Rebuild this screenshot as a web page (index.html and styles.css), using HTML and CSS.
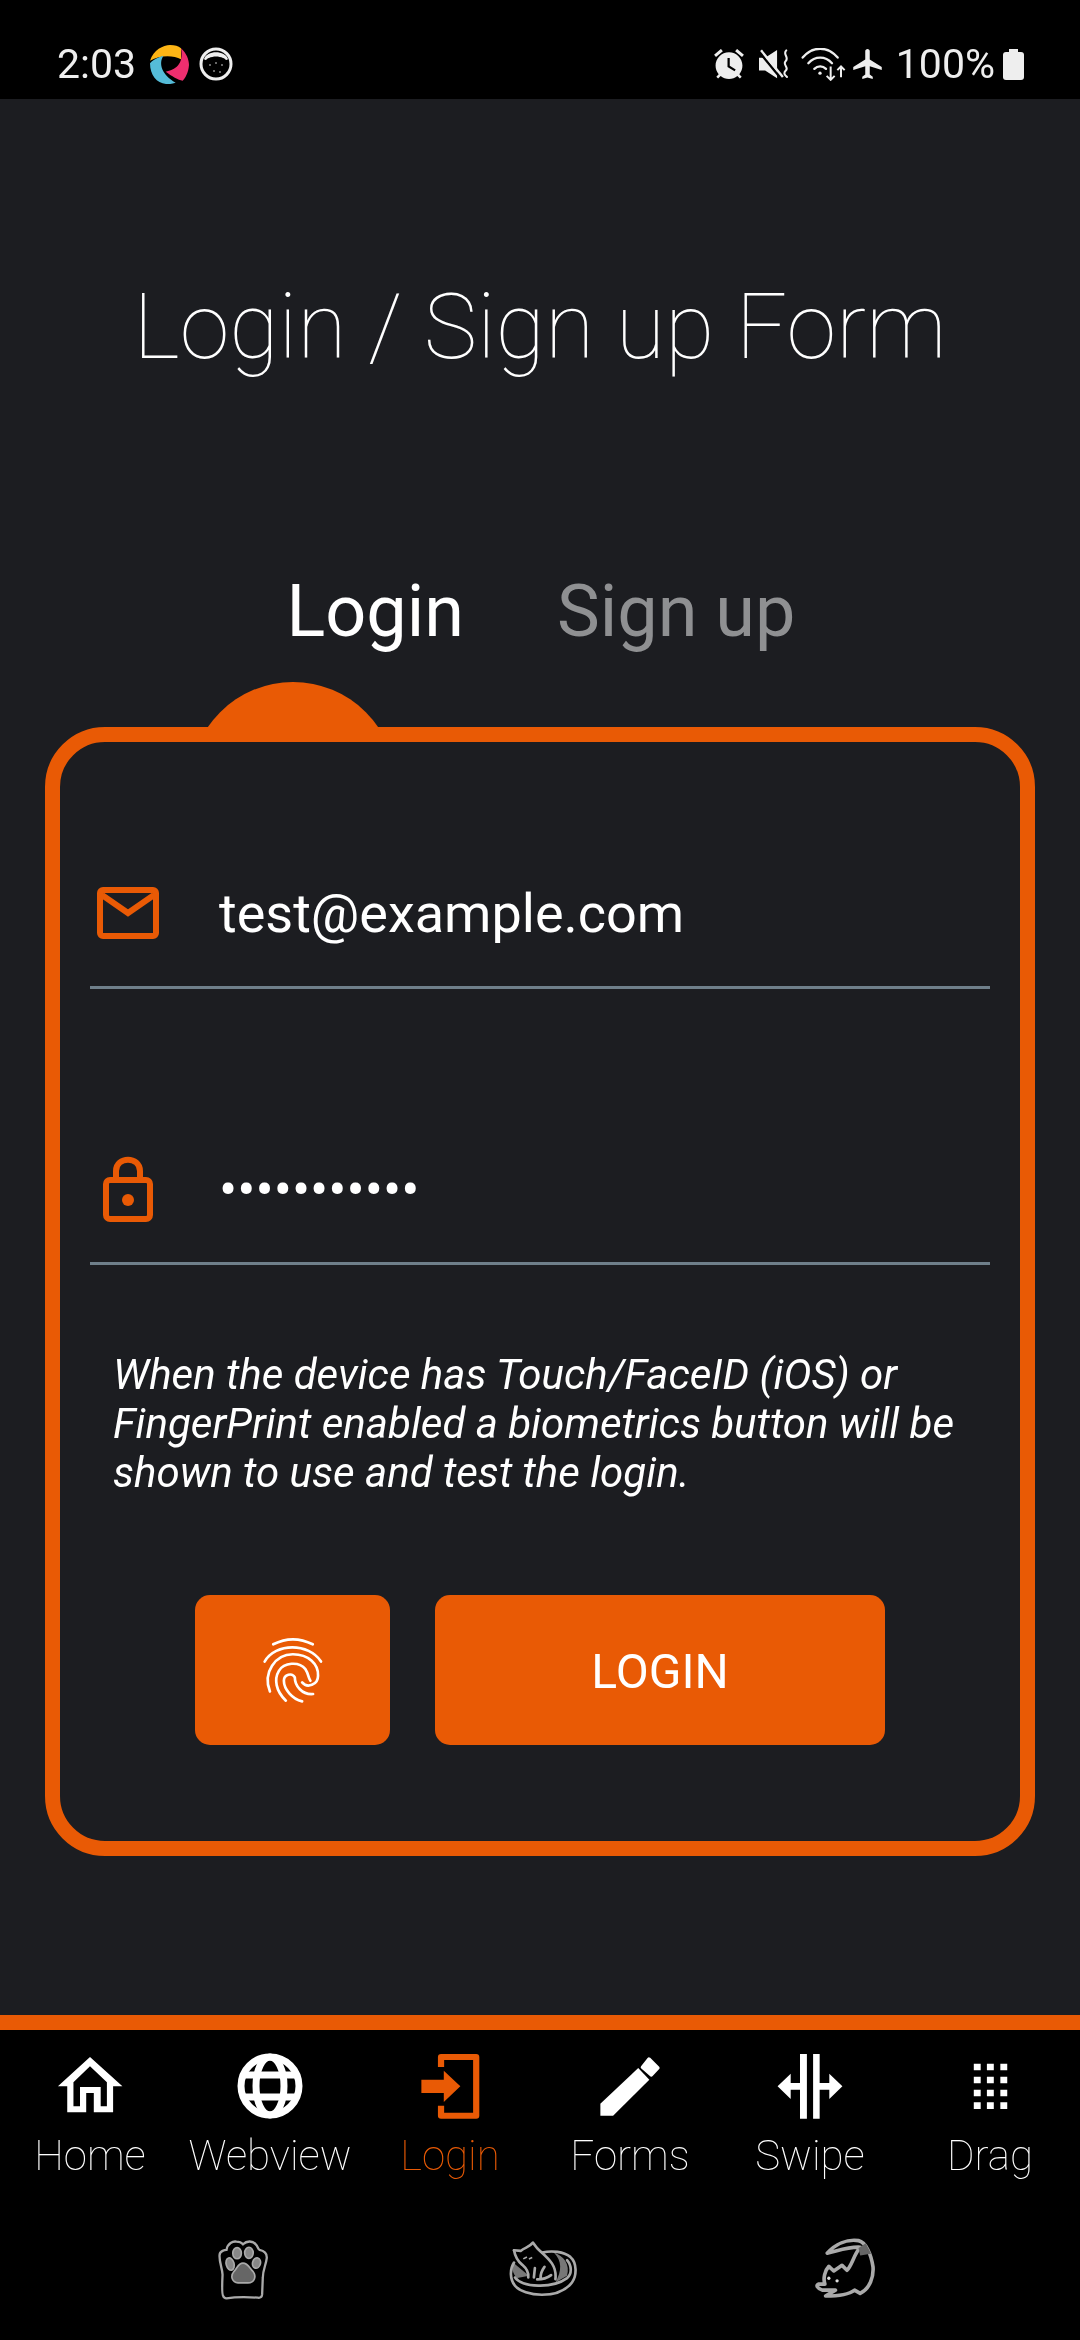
FILE: index.html
```html
<!DOCTYPE html>
<html lang="en">
  <head>
    <meta charset="UTF-8" />
    <meta name="viewport" content="width=device-width, initial-scale=1.0" />
    <title>Login / Sign up Form</title>
    <link rel="stylesheet" href="styles.css">
  </head>
  <body>
    <div class="status-bar">
      <div class="status-left">
        <span class="clock">2:03</span>
        <svg class="app-icon" viewBox="450 135 117 117">
          <path fill="#fdb515" d="M450 182C460 150 490 135 510 135C525 135 535 138 543 145L543 178C520 165 480 165 450 182Z" />
          <path fill="#ee2e6f" d="M543 145C560 160 567 180 567 195C565 220 555 235 548 242C535 240 515 228 497 215C525 210 552 195 543 145Z" />
          <path fill="#55bcd8" d="M450 190C465 172 490 168 490 168C475 190 485 225 527 248C515 252 505 252 498 252C470 250 450 225 450 190Z" />
        </svg>
        <svg class="app-icon cat-dot" viewBox="0 0 34 34">
          <circle cx="17" cy="17" r="15" fill="#000" stroke="#eee" stroke-width="3" />
          <path fill="#eee" d="M5 12C8 3 26 3 29 12C27 15 26 11 24 11C20 9 14 9 10 11C8 11 7 15 5 12Z" />
          <circle cx="11" cy="18" r="1" fill="#888" />
          <circle cx="17" cy="16" r="1" fill="#888" />
          <circle cx="23" cy="18" r="1" fill="#888" />
          <circle cx="15" cy="24" r="1" fill="#888" />
          <circle cx="21" cy="25" r="1" fill="#888" />
        </svg>
      </div>
      <div class="status-right">
        <svg class="alarm" viewBox="2 1.9 20 20.1">
          <path fill="#eee" fill-rule="evenodd" d="M22 5.72l-4.6-3.86-1.29 1.53 4.6 3.86L22 5.72zM7.88 3.39L6.6 1.86 2 5.71l1.29 1.53 4.59-3.85zM12 4c-4.97 0-9 4.03-9 9 0 2.2.8 4.2 2.1 5.8L3.5 20.5 4.7 21.7l1.7-1.7c1.5 1.3 3.5 2 5.6 2s4.1-.7 5.6-2l1.7 1.7 1.2-1.2-1.6-1.7c1.3-1.6 2.1-3.6 2.1-5.8 0-4.97-4.03-9-9-9zM11 8h1.5v5.2l4 2.4-.8 1.2L11 14V8z" />
        </svg>
        <svg class="mute" viewBox="232 92 88 88">
          <path fill="#eee" d="M232 118H250L285 95V178L250 155H232Z" />
          <path stroke="#000" stroke-width="7" d="M232 100L296 178" />
          <path stroke="#eee" stroke-width="7" d="M238 96L302 174" />
          <path fill="none" stroke="#eee" stroke-width="6" stroke-linecap="round" d="M312 96C300 108 322 116 310 128C300 138 322 146 310 156C302 164 310 170 314 174" />
        </svg>
        <svg class="wifi" viewBox="360 85 135 98">
          <g fill="none" stroke="#eee" stroke-width="7" stroke-linecap="round">
            <path d="M365 113C395 78 440 78 470 113" />
            <path d="M382 130C402 108 433 108 453 130" />
            <path d="M400 147C410 137 425 137 435 147" />
          </g>
          <circle cx="417" cy="160" r="5" fill="#eee" />
          <g fill="none" stroke="#eee" stroke-width="6">
            <path d="M449 140V180M437 168L449 180L461 168" />
            <path d="M480 172V140M469 151L480 140L491 151" />
          </g>
        </svg>
        <svg class="plane" viewBox="2 2 19 20">
          <path fill="#eee" d="M21 16v-2l-8-5V3.5c0-.83-.67-1.5-1.5-1.5S10 2.67 10 3.5V9l-8 5v2l8-2.5V19l-2 1.5V22l3.5-1 3.5 1v-1.5L13 19v-5.5l8 2.5z" />
        </svg>
        <span class="battery-text">100%</span>
        <div class="battery"></div>
      </div>
    </div>

    <div class="main">
      <h1 class="title">Login / Sign up Form</h1>
      <div class="tabs">
        <span class="tab active">Login</span>
        <span class="tab">Sign up</span>
      </div>

      <div class="card">
        <div class="field">
          <div class="field-icon">
            <svg class="mail-icon" viewBox="0 0 62 52">
              <rect x="3" y="3" width="56" height="46" rx="3" fill="none" stroke="#e95a05" stroke-width="6" />
              <path d="M5 8L31 26L57 8" fill="none" stroke="#e95a05" stroke-width="6" />
            </svg>
          </div>
          <span class="field-text">test@example.com</span>
        </div>
        <div class="field second">
          <div class="field-icon">
            <svg class="lock-icon" viewBox="0 0 50 66">
              <rect x="3" y="24" width="44" height="39" rx="4" fill="none" stroke="#e95a05" stroke-width="6" />
              <path d="M13 24V15C13 0 37 0 37 15V24" fill="none" stroke="#e95a05" stroke-width="6" />
              <circle cx="25" cy="44" r="6" fill="#e95a05" />
            </svg>
          </div>
          <span class="field-text dots">•••••••••••</span>
        </div>

        <p class="help">When the device has Touch/FaceID (iOS) or FingerPrint enabled a biometrics button will be shown to use and test the login.</p>

        <div class="buttons">
          <div class="btn btn-finger">
            <svg class="finger-icon" viewBox="280 200 185 205">
              <g fill="none" stroke="#fff" stroke-width="8" stroke-linecap="round">
                <path d="M313 225Q372 195 432 225" />
                <path d="M287 277C320 220 420 220 457 277" />
                <path d="M303 367C280 310 320 255 372 255C420 255 450 285 448 320C448 348 415 358 400 340" />
                <path d="M351 395C320 365 315 330 330 305C345 280 390 275 410 300C420 315 418 325 425 335" />
                <path d="M400 397C370 390 345 360 345 335C345 315 370 310 378 325C378 350 400 378 433 375" />
              </g>
            </svg>
          </div>
          <div class="btn btn-login"><span class="btn-text">LOGIN</span></div>
        </div>
      </div>
    </div>

    <div class="bottom">
      <div class="nav">
        <div class="nav-item">
          <svg class="nav-icon" viewBox="165.3 160 191.4 198" preserveAspectRatio="none">
            <path fill="#fff" fill-rule="evenodd" d="M261 172L355 260H328V338H272V280H250V338H195V260H168ZM261 200L213 248V320H232V262H292V320H310V248Z" />
          </svg>
          <span class="nav-label">Home</span>
        </div>
        <div class="nav-item">
          <svg class="nav-icon" viewBox="0 0 66 66">
            <g fill="none" stroke="#fff" stroke-width="7">
              <circle cx="33" cy="33" r="29" />
              <ellipse cx="33" cy="33" rx="14" ry="29" />
              <path d="M5 22H61M5 44H61" />
            </g>
          </svg>
          <span class="nav-label">Webview</span>
        </div>
        <div class="nav-item active">
          <svg class="nav-icon" viewBox="1209.3 160 191.4 198" preserveAspectRatio="none">
            <path fill="none" stroke="#e95a05" stroke-width="18" stroke-linejoin="round" d="M1279 202V172H1381V348H1279V318" />
            <path fill="#e95a05" d="M1222 240H1287V213L1335 260L1287 307V280H1222Z" />
          </svg>
          <span class="nav-label">Login</span>
        </div>
        <div class="nav-item">
          <svg class="nav-icon" viewBox="165.3 160 191.4 198" preserveAspectRatio="none">
            <path fill="#fff" d="M175 312L285 205L317 240L212 348H175Z" />
            <path fill="#fff" stroke="#fff" stroke-width="10" stroke-linejoin="round" d="M297 203L316 178L342 205L323 226Z" />
          </svg>
          <span class="nav-label">Forms</span>
        </div>
        <div class="nav-item">
          <svg class="nav-icon" viewBox="688.3 160 191.4 198" preserveAspectRatio="none">
            <path fill="#fff" d="M755 163H775V357H755ZM793 163H812V357H793ZM690 260L728 222V250H755V270H728V298ZM878 260L840 222V250H812V270H840V298Z" />
          </svg>
          <span class="nav-label">Swipe</span>
        </div>
        <div class="nav-item">
          <svg class="nav-icon" viewBox="1209.3 160 191.4 198" preserveAspectRatio="none">
            <path fill="#fff" d="M1258 192h20v20h-20zM1296 192h20v20h-20zM1335 192h20v20h-20zM1258 231h20v20h-20zM1296 231h20v20h-20zM1335 231h20v20h-20zM1258 270h20v20h-20zM1296 270h20v20h-20zM1335 270h20v20h-20zM1258 308h20v20h-20zM1296 308h20v20h-20zM1335 308h20v20h-20z" />
          </svg>
          <span class="nav-label">Drag</span>
        </div>
      </div>

      <div class="pets">
        <svg class="pet pet-paw" viewBox="80 82 150 185">
          <path fill="none" stroke="#aaa" stroke-width="7" d="M95 255Q90 250 93 190C92 170 82 150 84 130C85 118 100 115 105 115C108 95 125 88 135 90C148 90 155 98 155 98C165 88 185 85 195 100C200 105 200 112 205 115C220 118 228 128 227 140C225 160 215 175 215 200L213 250Q212 262 200 260C170 258 130 258 105 262Q97 262 95 255Z" />
          <g fill="#888" stroke="#aaa" stroke-width="5">
            <ellipse cx="137" cy="125" rx="13" ry="17" />
            <ellipse cx="173" cy="124" rx="13" ry="17" />
            <ellipse cx="116" cy="158" rx="12" ry="19" transform="rotate(-15 116 158)" />
            <ellipse cx="196" cy="155" rx="12" ry="16" transform="rotate(15 196 155)" />
          </g>
          <path fill="#666" stroke="#aaa" stroke-width="5" d="M155 155C170 155 175 170 185 180C197 195 190 215 170 215C160 215 150 215 140 215C122 213 115 195 128 180C138 170 140 155 155 155Z" />
        </svg>
        <svg class="pet pet-bed" viewBox="960 100 205 172">
          <path fill="#777" d="M1095 135C1125 145 1145 170 1135 205L1100 225C1120 190 1120 160 1095 135Z" />
          <path fill="#777" d="M972 165L1020 205L985 212C970 200 968 180 972 165Z" />
          <g fill="none" stroke="#aaa" stroke-width="8" stroke-linecap="round" stroke-linejoin="round">
            <path d="M975 165C962 185 962 215 978 235C1005 268 1110 278 1150 225C1165 205 1165 165 1145 148C1125 132 1090 128 1060 135" />
            <path d="M978 210C1000 240 1090 245 1135 212C1150 200 1150 175 1135 158" />
            <path d="M975 128L995 130C1010 118 1020 120 1032 105L1045 122C1075 150 1105 170 1100 215" />
            <path d="M975 128C978 145 985 160 1000 172C1015 185 1020 195 1018 210" />
            <path d="M1035 210L1038 182M1055 212C1055 200 1058 190 1067 178M1045 216C1062 216 1075 212 1087 203" />
          </g>
          <path stroke="#aaa" stroke-width="5" d="M1003 154L1014 148M1020 154L1030 150" />
        </svg>
        <svg class="pet pet-cat" viewBox="105 82 188 188">
          <g fill="none" stroke="#aaa" stroke-width="11" stroke-linecap="round" stroke-linejoin="round">
            <path d="M145 128C170 100 205 85 240 90C262 95 278 130 284 170C286 200 275 235 245 250L228 240C215 250 185 258 140 258L170 240H130C115 235 110 225 118 222L138 222C132 205 138 180 150 168L165 182L190 165L205 180C220 165 225 135 245 110C210 108 180 120 145 128Z" />
          </g>
          <path fill="#666" d="M240 112L262 98L278 130L245 135Z" />
          <circle cx="150" cy="204" r="5" fill="#ddd" />
          <circle cx="175" cy="212" r="5" fill="#ddd" />
        </svg>
      </div>
    </div>
  </body>
</html>
```

FILE: styles.css
```css
* {
  box-sizing: border-box;
}

body {
  margin: 0;
  width: 1080px;
  height: 2340px;
  display: flex;
  flex-direction: column;
  font-family: Roboto, sans-serif;
  background-color: #1c1d21;
  color: #fff;
  overflow: hidden;
}

svg {
  display: block;
}

/* own layer, so the text gets greyscale antialiasing like the phone */
.clock,
.battery-text,
.title,
.tab,
.field-text,
.help,
.btn-text,
.nav-label {
  will-change: opacity;
}

.status-bar {
  height: 99px;
  background-color: #000;
  color: #eee;
  display: flex;
  justify-content: space-between;
  align-items: center;
  padding: 29px 56px 0 57px;
  font-size: 41px;
  flex-shrink: 0;
}

.status-left,
.status-right {
  display: flex;
  align-items: center;
}

.app-icon {
  width: 39px;
  height: 39px;
  margin-left: 14px;
}

.cat-dot {
  width: 34px;
  height: 34px;
  margin-left: 10px;
}

.alarm {
  width: 30px;
  height: 30px;
}

.mute {
  width: 30px;
  height: 30px;
  margin-left: 15px;
}

.wifi {
  width: 45px;
  height: 33px;
  margin-left: 12px;
}

.plane {
  width: 31px;
  height: 30px;
  margin-left: 6px;
}

.battery-text {
  margin-left: 13px;
}

.battery {
  position: relative;
  width: 21px;
  height: 28px;
  margin: 3px 0 0 8px;
  background-color: #eee;
  border-radius: 3px;
}

.battery::before {
  content: '';
  position: absolute;
  top: -3px;
  left: 6px;
  width: 9px;
  height: 4px;
  background-color: #eee;
}

.main {
  position: relative;
  z-index: 0;
  flex: 1;
  display: flex;
  flex-direction: column;
  align-items: center;
}

.title {
  margin: 179px 0 0;
  font-size: 90px;
  line-height: 100px;
  font-weight: 100;
}

.tabs {
  display: flex;
  gap: 93px;
  margin: 188px 0 0 2px;
  height: 90px;
  align-items: center;
}

.tab {
  font-size: 72px;
  color: #8f9092;
}

.tab.active {
  color: #fff;
}

.card {
  position: relative;
  width: 990px;
  height: 1129px;
  margin-top: 71px;
  padding: 124px 30px 0;
  background-color: #1c1d21;
  border: 15px solid #e95a05;
  border-radius: 60px;
}

/* half circle sticking out above the active tab */
.card::before {
  content: '';
  position: absolute;
  z-index: -1;
  top: -60px;
  left: 130px;
  width: 206px;
  height: 206px;
  border-radius: 50%;
  background-color: #e95a05;
}

.field {
  display: flex;
  align-items: center;
  height: 123px;
  padding-bottom: 26px;
  border-bottom: 3px solid #6f7f8a;
}

.field.second {
  margin-top: 153px;
}

.field-icon {
  width: 75px;
  display: flex;
  justify-content: center;
}

.mail-icon {
  width: 62px;
  height: 52px;
}

.lock-icon {
  width: 50px;
  height: 66px;
}

.field-text {
  margin-left: 54px;
  font-size: 54px;
}

.help {
  margin: 85px 0 0;
  padding-left: 23px;
  font-size: 42px;
  line-height: 49px;
  font-style: italic;
}

.buttons {
  display: flex;
  gap: 45px;
  margin-top: 98px;
  padding-left: 105px;
}

.btn {
  height: 150px;
  background-color: #e95a05;
  border-radius: 15px;
  display: flex;
  align-items: center;
  justify-content: center;
}

.btn-finger {
  width: 195px;
}

.finger-icon {
  width: 62px;
  height: 68px;
}

.btn-login {
  width: 450px;
  padding-top: 3px;
  font-size: 48px;
  font-weight: 400;
}

.bottom {
  height: 325px;
  flex-shrink: 0;
  background-color: #000;
  border-top: 15px solid #e95a05;
}

.nav {
  display: grid;
  grid-template-columns: repeat(6, 1fr);
  padding-top: 23px;
}

.nav-item {
  display: flex;
  flex-direction: column;
  align-items: center;
}

.nav-icon {
  width: 66px;
  height: 66px;
}

.nav-label {
  margin-top: 12px;
  font-size: 42px;
  line-height: 50px;
  font-weight: 100;
}

.nav-item.active .nav-label {
  color: #e95a05;
}

.pets {
  display: grid;
  grid-template-columns: repeat(3, 300px);
  justify-content: center;
  justify-items: center;
  align-items: center;
  margin-top: 57px;
  padding-left: 6px;
}

.pet-paw {
  width: 50px;
  height: 61px;
}

.pet-bed {
  width: 68px;
  height: 57px;
}

.pet-cat {
  width: 62px;
  height: 62px;
  margin-left: 4px;
}
```
